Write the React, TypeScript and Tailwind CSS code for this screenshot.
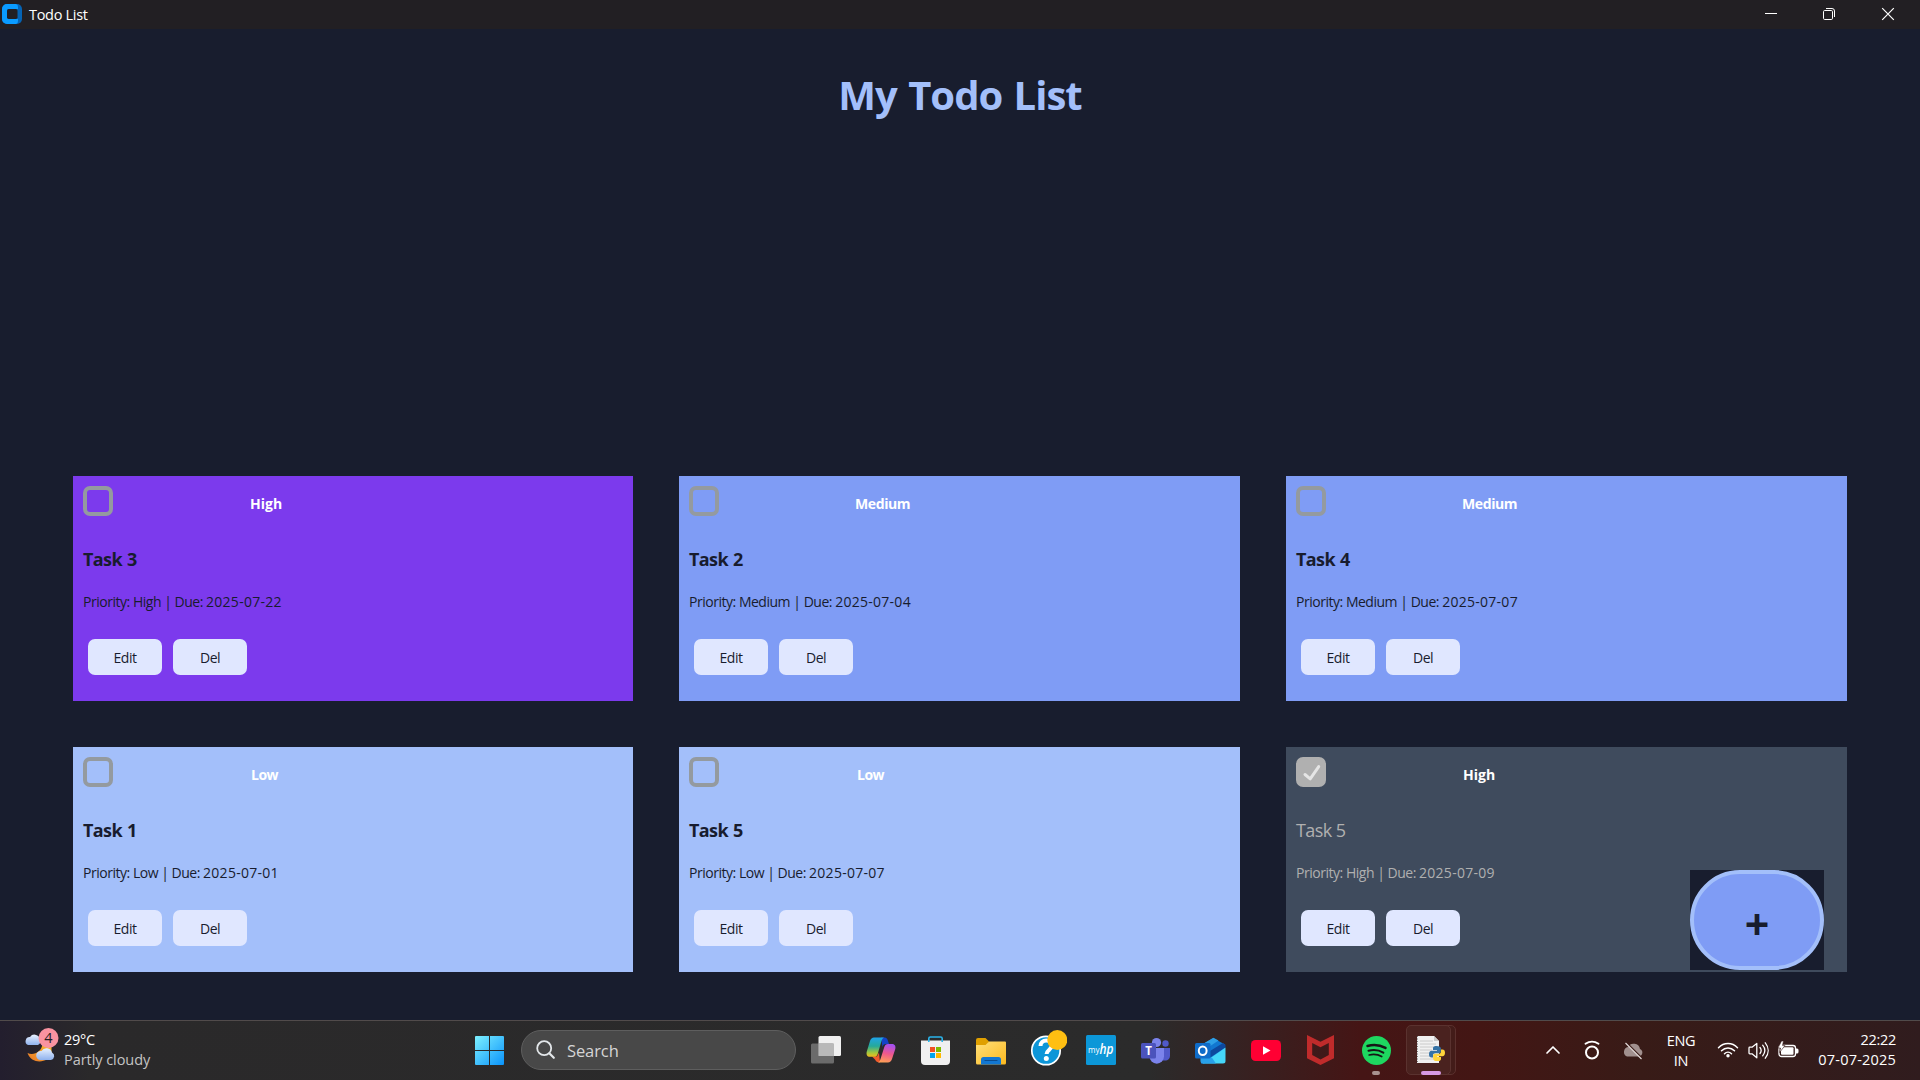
import React from "react";
import type { ReactNode } from "react";

type Level = "High" | "Medium" | "Low";

interface Task {
  name: string;
  level: Level;
  due: string;
  done?: boolean;
}

const tasks: Task[] = [
  { name: "Task 3", level: "High", due: "2025-07-22" },
  { name: "Task 2", level: "Medium", due: "2025-07-04" },
  { name: "Task 4", level: "Medium", due: "2025-07-07" },
  { name: "Task 1", level: "Low", due: "2025-07-01" },
  { name: "Task 5", level: "Low", due: "2025-07-07" },
  { name: "Task 5", level: "High", due: "2025-07-09", done: true },
];

const cardColor: Record<Level, string> = {
  High: "bg-[#7c3aed]",
  Medium: "bg-[#7f9cf5]",
  Low: "bg-[#a3bffa]",
};

const labelSpacing: Record<Level, string> = {
  High: "ml-[137px] tracking-[0px]",
  Medium: "ml-[136px] tracking-[-0.4px]",
  Low: "ml-[138px] tracking-[-0.5px]",
};

function TitleBar() {
  return (
    <header className="flex h-[29px] shrink-0 items-start bg-[#221f23] text-white">
      <svg className="ml-[2px] mt-1 h-5 w-5" viewBox="0 0 20 20">
        <rect width="20" height="20" rx="5" fill="#0563b4" />
        <path d="M5 0h9a3 3 0 0 1 2 3v2H7a2 2 0 0 0-2 2v6a2 2 0 0 0 2 2h9v2a3 3 0 0 1-2 3H5a5 5 0 0 1-5-5V5a5 5 0 0 1 5-5z" fill="#0a9bff" />
        <rect x="5" y="5" width="10.5" height="10" rx="1.8" fill="#221f23" />
      </svg>
      <span className="ml-[7px] text-[14.5px] leading-[29px] tracking-[-0.3px]">Todo List</span>
      <div className="ml-auto flex text-white">
        <svg className="h-7 w-[58px]" viewBox="0 0 58 28" fill="none" stroke="currentColor">
          <path d="M25 13.5h12" />
        </svg>
        <svg className="h-7 w-[58px]" viewBox="0 0 58 28" fill="none" stroke="currentColor">
          <rect x="25.500" y="10.5" width="9" height="9" rx="1.2" />
          <path d="M28 8.5h6a2.5 2.5 0 0 1 2.5 2.5v6" />
        </svg>
        <svg className="h-7 w-[64px]" viewBox="0 0 64 28" fill="none" stroke="currentColor" strokeWidth="1.2">
          <path d="M26.2 8.2l11.6 11.6M37.8 8.2L26.2 19.8" />
        </svg>
      </div>
    </header>
  );
}

function CheckBox({ checked }: { checked?: boolean }) {
  if (checked) {
    return (
      <span className="mt-[10px] flex h-[30px] w-[30px] items-center justify-center rounded-[7px] bg-[#b0b0b0]">
        <svg className="h-[30px] w-[30px]" viewBox="0 0 30 30" fill="none" stroke="#e5e5e5" strokeWidth="3" strokeLinecap="round" strokeLinejoin="round">
          <path d="M9 17.5l5.2 4.3L22.7 9.6" />
        </svg>
      </span>
    );
  }
  return <span className="mt-[10px] h-[30px] w-[30px] rounded-[7px] border-4 border-[#949a9f]" />;
}

function CardButton({ children }: { children: ReactNode }) {
  return (
    <button className="h-9 w-[74px] rounded-[7px] bg-[#e0e7ff] pt-[2px] text-[14px] leading-[34px] tracking-[-0.5px] text-[#181c2e]">
      {children}
    </button>
  );
}

function TaskCard({ task }: { task: Task }) {
  const tone = task.done ? "text-[#b0b0b0]" : "text-[#181c2e]";
  return (
    <article className={`h-[225px] px-[10px] ${task.done ? "bg-[#3f4b5d]" : cardColor[task.level]}`}>
      <div className="flex h-[56px]">
        <CheckBox checked={task.done} />
        <span className={`text-[14px] font-bold leading-[55px] text-white ${labelSpacing[task.level]}`}>{task.level}</span>
      </div>
      <h2 className={`text-[18px] leading-[55px] ${tone} ${task.done ? "font-normal tracking-[-0.6px]" : "font-bold tracking-[-0.6px] [word-spacing:1px]"}`}>
        {task.name}
      </h2>
      <p className={`text-[14px] leading-[29px] tracking-[-0.48px] ${tone}`}>
        Priority: {task.level} | Due: <span className="tracking-[0.27px]">{task.due}</span>
      </p>
      <div className="ml-[5px] mt-[23px] flex gap-[11px]">
        <CardButton>Edit</CardButton>
        <CardButton>Del</CardButton>
      </div>
    </article>
  );
}

function WeatherIcon() {
  return (
    <svg className="h-[38px] w-[36px]" viewBox="0 0 36 38">
      <defs>
        <linearGradient id="cloud" x1="0" y1="0" x2="0" y2="1">
          <stop offset="0" stopColor="#e8f1ff" />
          <stop offset="1" stopColor="#8fb2ee" />
        </linearGradient>
        <linearGradient id="moon" x1="1" y1="0" x2="0" y2="1">
          <stop offset="0" stopColor="#f9bd2c" />
          <stop offset="1" stopColor="#e8762a" />
        </linearGradient>
      </defs>
      <path d="M4 18H14a4 4 0 0 0 2-5 5.500 5.500 0 0 0-10-3 4.200 4.200 0 0 0-2 8z" fill="url(#cloud)" />
      <path d="M3.500 26c6 3 14-1 15-9l9 1v9c-3 9-20 11-24-1z" fill="url(#moon)" />
      <path d="M16 33h11a4 4 0 0 0 1-7.500 5.800 5.800 0 0 0-10.500-1.500A4.500 4.500 0 0 0 16 33z" fill="url(#cloud)" />
      <circle cx="24.500" cy="11" r="10" fill="#f993a0" />
      <text x="24.500" y="16.200" textAnchor="middle" fontSize="14.500" fill="#221f23">4</text>
    </svg>
  );
}

function AppCell({ children }: { children: ReactNode }) {
  return <div className="relative flex h-[59px] w-[55px] items-center justify-center">{children}</div>;
}

function StartIcon() {
  return (
    <svg className="h-[29px] w-[29px]" viewBox="0 0 29 29">
      <defs>
        <linearGradient id="win" x1="0" y1="0" x2="29" y2="29" gradientUnits="userSpaceOnUse">
          <stop offset="0" stopColor="#7df0ff" />
          <stop offset="1" stopColor="#0a93fb" />
        </linearGradient>
      </defs>
      <path d="M1 0h13v14H0V1a1 1 0 0 1 1-1zM15 0h13a1 1 0 0 1 1 1v13H15zM0 15h14v14H1a1 1 0 0 1-1-1zM15 15h14v13a1 1 0 0 1-1 1H15z" fill="url(#win)" />
    </svg>
  );
}

function TaskViewIcon() {
  return (
    <svg className="mb-px h-7 w-[30px]" viewBox="0 0 30 28">
      <rect x="7.500" y="0" width="22.500" height="20" rx="1.500" fill="#f0f0f0" />
      <rect x="0" y="7.500" width="23" height="20" rx="1.500" fill="#777" fillOpacity="0.85" />
      <path d="M7.500 7.500H23V20H7.500z" fill="#b9b9b9" />
    </svg>
  );
}

function CopilotIcon() {
  return (
    <svg className="mb-[2px] h-[28px] w-[30px]" viewBox="0 0 30 28">
      <defs>
        <linearGradient id="cpA" x1="0" y1="0" x2="0" y2="1">
          <stop offset="0" stopColor="#1fa4e8" />
          <stop offset="0.450" stopColor="#25a99a" />
          <stop offset="0.800" stopColor="#a8c83a" />
          <stop offset="1" stopColor="#f4b81c" />
        </linearGradient>
        <linearGradient id="cpB" x1="0.500" y1="0" x2="0.300" y2="1">
          <stop offset="0" stopColor="#a550f0" />
          <stop offset="0.500" stopColor="#f0588c" />
          <stop offset="1" stopColor="#ffa155" />
        </linearGradient>
      </defs>
      <path d="M15 1.500h3.500c2 0 3 1.500 3.500 3.500l1 3h-3c-2 0-3 1-3.500 3z" fill="#1443c8" />
      <path d="M6 20.500h5l2-4 1 10c-3 0-4-1-5-3z" fill="#f15a2c" />
      <path d="M8 1.500h10c-1.500.8-2 2-2.500 3.500l-3.800 13c-.7 2-1.700 2.800-3.700 2.800H4c-3 0-4-2.400-3.200-5.300L4 5c.8-2.300 2-3.500 4-3.500z" fill="url(#cpA)" />
      <path d="M22 26.500H12c1.500-.8 2-2 2.500-3.500l3.800-12c.7-2 1.700-3 3.700-3h4c3 0 4 2.400 3.200 5.300L26 23c-.8 2.300-2 3.500-4 3.500z" fill="url(#cpB)" />
    </svg>
  );
}

function StoreIcon() {
  return (
    <svg className="h-[29px] w-[29px]" viewBox="0 0 29 29">
      <path d="M0 4.500h29V25a4 4 0 0 1-4 4H4a4 4 0 0 1-4-4z" fill="#f0f0f0" />
      <path d="M7.800 6V2.500a1.500 1.500 0 0 1 1.500-1.500h10.400a1.500 1.500 0 0 1 1.500 1.500V6" fill="none" stroke="#2ab4ea" strokeWidth="1.600" />
      <path d="M9 11h5v5H9z" fill="#f25022" />
      <path d="M15 11h5v5h-5z" fill="#7fba00" />
      <path d="M9 17h5v5H9z" fill="#00a4ef" />
      <path d="M15 17h5v5h-5z" fill="#ffb900" />
    </svg>
  );
}

function ExplorerIcon() {
  return (
    <svg className="h-[28px] w-[30px]" viewBox="0 0 30 28">
      <defs>
        <linearGradient id="folder" x1="0" y1="0" x2="1" y2="1">
          <stop offset="0" stopColor="#ffe07a" />
          <stop offset="1" stopColor="#fcb91f" />
        </linearGradient>
      </defs>
      <path d="M0 3a2 2 0 0 1 2-2h7.500L13 4.500 10 10H0z" fill="#e0a000" />
      <path d="M0 8h9.500L13 4.500h16a1 1 0 0 1 1 1V26a1.500 1.500 0 0 1-1.500 1.500h-27A1.500 1.500 0 0 1 0 26z" fill="url(#folder)" />
      <path d="M5 27.500V22.500a2.500 2.500 0 0 1 2.500-2.500h15a2.500 2.500 0 0 1 2.500 2.500v5z" fill="#1277d2" />
      <path d="M9 23.500h12" stroke="#0a4c90" strokeWidth="1.200" strokeLinecap="round" />
    </svg>
  );
}

function HelpIcon() {
  return (
    <svg className="h-[42px] w-[42px]" viewBox="-4 1.500 42 42">
      <circle cx="17" cy="22" r="14.200" fill="#0d96d8" stroke="#fff" strokeWidth="1.700" />
      <path d="M11.500 17.500c0-3.500 2.500-5.500 5.800-5.500 3.400 0 5.700 1.900 5.700 4.800 0 4.300-5.400 4.500-5.400 8.700" fill="none" stroke="#fff" strokeWidth="4" />
      <circle cx="17.300" cy="30" r="2.500" fill="#fff" />
      <circle cx="28.300" cy="11.500" r="10" fill="#ffbf12" />
    </svg>
  );
}

function MyHpIcon() {
  return (
    <svg className="mb-px h-[30px] w-[30px]" viewBox="0 0 30 30">
      <rect width="30" height="30" rx="1.500" fill="#0c97d8" />
      <text x="2" y="17.500" fontSize="9" fill="#fff" textLength="11.500" lengthAdjust="spacingAndGlyphs">my</text>
      <text x="13.500" y="18.500" fontSize="15" fontStyle="italic" fontWeight="600" fill="#fff" textLength="14" lengthAdjust="spacingAndGlyphs">hp</text>
    </svg>
  );
}

function TeamsIcon() {
  return (
    <svg className="h-[28px] w-[30px]" viewBox="0 0 30 28">
      <circle cx="24.500" cy="6.500" r="3.200" fill="#5059c9" />
      <path d="M20 11h9v7.500c0 3.500-2 5-5 5h-4z" fill="#5059c9" />
      <circle cx="15.500" cy="5.500" r="4.600" fill="#7b83eb" />
      <path d="M8.500 11H23v8.500a7.200 7.200 0 0 1-14.500 0z" fill="#7b83eb" />
      <rect x="0" y="6" width="15" height="15.500" rx="1.500" fill="#4b53bc" />
      <text x="7.500" y="17.800" fontSize="11.500" fontWeight="700" textAnchor="middle" fill="#fff">T</text>
    </svg>
  );
}

function OutlookIcon() {
  return (
    <svg className="h-[28px] w-[31px]" viewBox="0 0 31 28">
      <path d="M5 9L18 1l12 6.500v5L9 26.500H6z" fill="#1277d0" />
      <path d="M6 8L18.500.8l5 2.700L10 12.500z" fill="#2d9fe6" />
      <path d="M15 14l13-8 2.500 1.800v2.700L12 22.500z" fill="#0d489e" />
      <path d="M30.500 10.500V24a2.500 2.500 0 0 1-2.500 2.500H7.500z" fill="#45d6f9" />
      <path d="M5.500 20l11.500.8 4 5.700H8a2.500 2.500 0 0 1-2.500-2.500z" fill="#28a0ea" />
      <rect x="0" y="6" width="15.500" height="15.500" rx="1.500" fill="#0f6cc9" />
      <ellipse cx="7.700" cy="13.700" rx="3.900" ry="4.300" fill="none" stroke="#fff" strokeWidth="2" />
    </svg>
  );
}

function YouTubeIcon() {
  return (
    <svg className="mb-px h-[21px] w-[30px]" viewBox="0 0 30 21">
      <rect width="30" height="21" rx="4.500" fill="#ff0033" />
      <path d="M12 6.200l7.500 4.300-7.500 4.300z" fill="#fff" />
    </svg>
  );
}

function McAfeeIcon() {
  return (
    <svg className="mb-px h-[30px] w-[27px]" viewBox="0 0 27 30">
      <path d="M0 0l13.500 6.800L27 0v23.200L13.500 30 0 23.200zM5.200 8v12l8.300 4.400 8.300-4.400V8l-8.300 4.200z" fill="#c02b2b" fillRule="evenodd" />
    </svg>
  );
}

function SpotifyIcon() {
  return (
    <svg className="ml-px h-[29px] w-[29px]" viewBox="0 0 29 29">
      <circle cx="14.500" cy="14.500" r="14.500" fill="#1ed760" />
      <g fill="none" stroke="#161616" strokeLinecap="round">
        <path d="M5.500 10c6-1.700 12.500-1 18 1.900" strokeWidth="2.500" />
        <path d="M6.500 14.800c5-1.300 10.300-.8 14.800 1.800" strokeWidth="2.100" />
        <path d="M7.200 19c4.200-1 8.700-.6 12.500 1.600" strokeWidth="1.700" />
      </g>
    </svg>
  );
}

function PythonFileIcon() {
  return (
    <svg className="mb-[2px] h-[29px] w-[29px]" viewBox="0 0 29 29">
      <path d="M1 1h17l5 5v22H1z" fill="#f1f1f1" />
      <path d="M18 1l5 5h-5z" fill="#c9c9c9" />
      <path d="M4 6h13M4 9h16M4 12h16M4 15h12M4 18h10M4 21h10M4 24h16" stroke="#c6c6c6" strokeWidth="0.900" />
      <path d="M1.500 1v27" stroke="#777" strokeWidth="1" strokeDasharray="1 1.500" />
      <path d="M20.500 11c-3 0-3.500 1.200-3.500 2.600V15h4v.8h-5.500c-1.600 0-2.500 1.300-2.500 3.400s.9 3.300 2.500 3.300H17v-2c0-1.500 1-2.300 2.400-2.300h3.400c1.300 0 2.100-.8 2.100-2v-2.600c0-1.600-1.300-2.600-4.400-2.600z" fill="#3572a5" />
      <path d="M21.500 26c3 0 3.500-1.200 3.500-2.600V22h-4v-.8h5.500c1.600 0 2.500-1.300 2.500-3.400s-.9-3.300-2.500-3.300H25v2c0 1.500-1 2.300-2.400 2.300h-3.400c-1.300 0-2.100.8-2.100 2v2.600c0 1.600 1.300 2.600 4.400 2.600z" fill="#ffd43b" />
    </svg>
  );
}

function Tray() {
  return (
    <div className="ml-auto flex h-[59px] items-center text-white">
      <svg className="h-[60px] w-[16px]" viewBox="0 0 16 60" fill="none" stroke="currentColor" strokeWidth="1.700" strokeLinecap="round" strokeLinejoin="round">
        <path d="M2 32l6-6 6 6" />
      </svg>
      <svg className="ml-[22px] h-[60px] w-[18px]" viewBox="0 0 18 60" fill="none" stroke="currentColor" strokeLinecap="round">
        <circle cx="9" cy="31.500" r="6" strokeWidth="2" />
        <path d="M2.500 22.800c4-2.700 9-2.700 13 0" strokeWidth="1.900" />
      </svg>
      <svg className="ml-[21px] h-[60px] w-[22px]" viewBox="0 0 22 60">
        <path d="M5 35.500h12a4 4 0 0 0 1-7.600 6.500 6.500 0 0 0-12-1.900A5 5 0 0 0 5 35.500z" fill="#a1908e" />
        <path d="M4 21.500l16 16" stroke="#3b1b17" strokeWidth="2" />
        <path d="M3.500 22l16 16" stroke="#e8e0df" strokeWidth="1.100" />
      </svg>
      <div className="ml-[18px] w-[38px] text-center text-[14.500px] leading-5 tracking-[-0.300px]">
        <div>ENG</div>
        <div>IN</div>
      </div>
      <svg className="ml-[17px] h-[60px] w-[22px]" viewBox="0 0 22 60" fill="none" stroke="currentColor" strokeWidth="1.500" strokeLinecap="round">
        <path d="M1.500 26.800c5.300-5.600 13.700-5.600 19 0M4.500 29.800c3.700-3.800 9.300-3.800 13 0M7.500 32.700c2-2 5-2 7 0" />
        <circle cx="11" cy="34.700" r="1.700" fill="currentColor" stroke="none" />
      </svg>
      <svg className="ml-[9px] h-[60px] w-[21px]" viewBox="0 0 21 60" fill="none" stroke="currentColor" strokeWidth="1.300" strokeLinecap="round" strokeLinejoin="round">
        <path d="M1 27v5a.8.8 0 0 0 .8.800H4l4.800 4V22.500L4 26.200H1.800a.8.800 0 0 0-.8.800zM12 26.500c1.400 1.800 1.400 4.200 0 6M14.700 24.200c2.600 3.200 2.600 7.400 0 10.600M17.300 21.800c3.800 4.700 3.800 10.700 0 15.400" />
      </svg>
      <svg className="ml-[9px] h-[60px] w-[21px]" viewBox="0 0 21 60">
        <rect x="1" y="24.500" width="16.500" height="11" rx="2.500" fill="none" stroke="currentColor" strokeWidth="1.300" />
        <rect x="3" y="26.300" width="12.500" height="7.400" rx="1" fill="currentColor" />
        <path d="M18 27.500h1a1.500 1.500 0 0 1 1.500 1.500v2A1.500 1.500 0 0 1 19 32.500h-1z" fill="currentColor" />
        <path d="M3.500 20L0 27h2.500l-1 4.500L7 24.500H4.500L5.500 20z" fill="currentColor" stroke="#381a17" strokeWidth="0.600" />
      </svg>
      <div className="mb-[2px] ml-[16px] mr-6 w-[81px] whitespace-nowrap text-right text-[14.500px] leading-5">
        <div className="tracking-[-0.3px]">22:22</div>
        <div className="tracking-[0.2px]">07-07-2025</div>
      </div>
    </div>
  );
}

function Taskbar() {
  return (
    <footer className="flex h-[60px] shrink-0 border-t border-[#514b4b] bg-[linear-gradient(90deg,#231e2e_0px,#2a292a_90px,#2b2b2b_1150px,#451515_1360px,#431614_1480px,#381b17_1640px,#301c1e_1920px)]">
      <div className="flex w-[462px] items-start">
        <div className="ml-6 mt-[6px]"><WeatherIcon /></div>
        <div className="ml-1 mt-[9px] text-[14.500px] leading-5">
          <div className="tracking-[-0.3px] text-white">29°C</div>
          <div className="tracking-[-0.06px] text-[#c4c4c4]">Partly cloudy</div>
        </div>
      </div>
      <AppCell><StartIcon /></AppCell>
      <div className="ml-1 mt-[9px] flex h-10 w-[275px] items-center rounded-full border border-[#5e5e5e] bg-[#484848]">
        <svg className="ml-[14px] h-5 w-5" viewBox="0 0 20 20" fill="none" stroke="#e3e7ea" strokeLinecap="round">
          <circle cx="8.200" cy="8.200" r="7" strokeWidth="1.800" />
          <path d="M13.300 13.300l4.500 4.500" strokeWidth="2.200" />
        </svg>
        <span className="ml-[11px] mt-[2px] text-[16.500px] tracking-[-0.100px] text-[#d5d5d5]">Search</span>
      </div>
      <div className="ml-[2px] flex">
        <AppCell><TaskViewIcon /></AppCell>
        <AppCell><CopilotIcon /></AppCell>
        <AppCell><StoreIcon /></AppCell>
        <AppCell><ExplorerIcon /></AppCell>
        <AppCell><HelpIcon /></AppCell>
        <AppCell><MyHpIcon /></AppCell>
        <AppCell><TeamsIcon /></AppCell>
        <AppCell><OutlookIcon /></AppCell>
        <AppCell><YouTubeIcon /></AppCell>
        <AppCell><McAfeeIcon /></AppCell>
        <AppCell>
          <SpotifyIcon />
          <span className="absolute bottom-[5px] h-1 w-2 rounded-full bg-[#a8918f]" />
        </AppCell>
        <AppCell>
          <span className="absolute left-[9px] top-[4px] h-[50px] w-[44px] rounded-[5px] border border-[#5a302d] bg-[#431c19]" />
          <span className="absolute left-[3px] top-[4px] h-[50px] w-[45px] rounded-[5px] border border-[#5a322f] bg-[#4a221f]" />
          <span className="relative flex"><PythonFileIcon /></span>
          <span className="absolute bottom-[5px] h-1 w-5 rounded-full bg-[#d79ae4]" />
        </AppCell>
      </div>
      <Tray />
    </footer>
  );
}

export default function App() {
  return (
    <div className="relative flex h-[1080px] w-[1920px] flex-col overflow-hidden bg-[#181d2e] font-['Open_Sans',sans-serif]">
      <TitleBar />
      <main className="flex flex-1 flex-col">
        <h1 className="text-center text-[40px] font-bold leading-[131px] tracking-[-1px] text-[#a3bffa] [word-spacing:2px]">My Todo List</h1>
        <section className="mt-auto mb-12 ml-[73px] grid w-[1774px] grid-cols-[560px_561px_561px] gap-[46px]">
          {tasks.map((task, i) => (
            <TaskCard key={i} task={task} />
          ))}
        </section>
      </main>
      <div className="absolute left-[1690px] top-[870px] h-[100px] w-[134px] bg-[#181d2e]">
        <button className="block h-[100px] w-[134px] rounded-[50px] border-4 border-[#a3bffa] bg-[#7f9cf5] pt-[7px] text-[43px] font-bold leading-[85px] text-[#181c2e]">
          +
        </button>
      </div>
      <Taskbar />
    </div>
  );
}
